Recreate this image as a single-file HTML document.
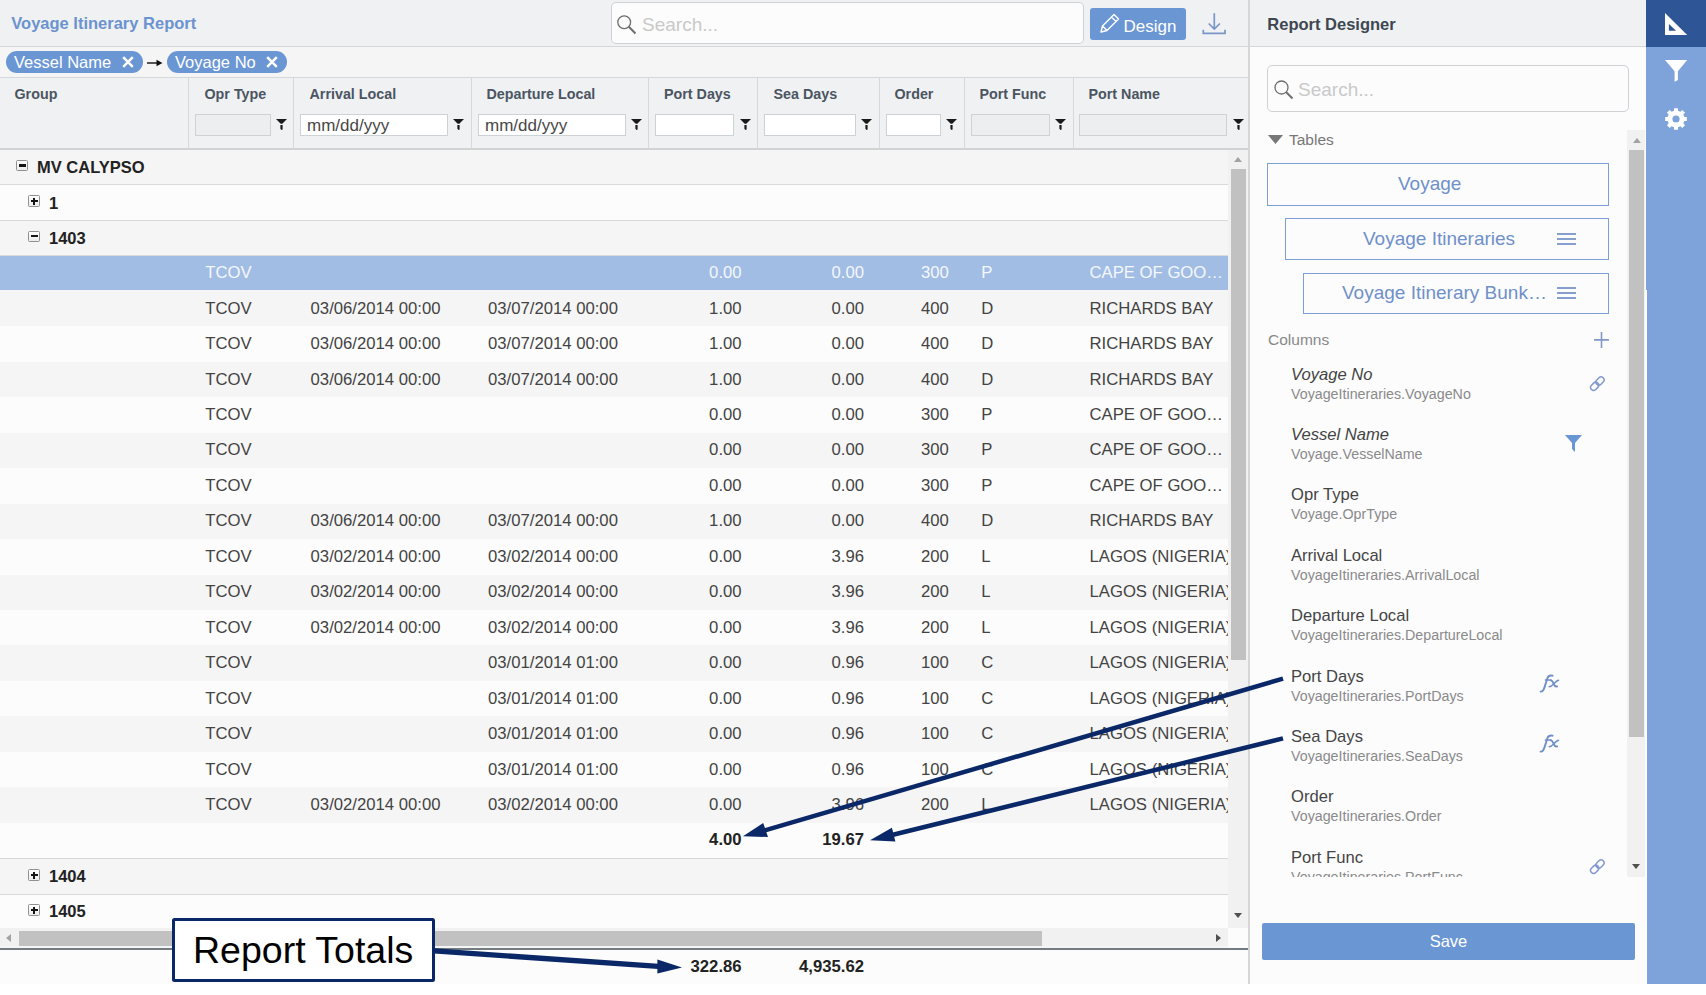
<!DOCTYPE html>
<html><head><meta charset="utf-8"><style>
*{box-sizing:border-box}
html,body{margin:0;padding:0}
body{width:1706px;height:995px;overflow:hidden;background:#fff;position:relative;font-family:"Liberation Sans", sans-serif;}
.ab{position:absolute}
.t{position:absolute;white-space:nowrap;line-height:1}
.d{font-size:16.7px;color:#434343}
.hd{font-size:14.3px;font-weight:bold;color:#4b5561}
.fi{position:absolute;top:114px;height:22px;border:1px solid #cdd2d6;background:#fff}
.fi.dis{background:#eceef0}
.fic{position:absolute;top:119px;width:11px;height:11px}
.r{text-align:right}
</style></head><body>

<div class="ab" style="left:0;top:0;width:1248px;height:984px;background:#f4f5f6"></div>
<div class="ab" style="left:0;top:0;width:1248px;height:47px;background:#f0f1f3;border-bottom:1px solid #d5d8db"></div>
<div class="t" style="left:11.3px;top:15px;font-size:16.5px;font-weight:bold;color:#6b93cf">Voyage Itinerary Report</div>
<div class="ab" style="left:611px;top:2px;width:473px;height:42px;border:1px solid #cfd2d5;border-radius:5px;background:#fcfcfc"></div>
<svg class="ab" style="left:616px;top:14px" width="22" height="22" viewBox="0 0 22 22"><circle cx="8.2" cy="8.2" r="6.4" fill="none" stroke="#6e6e6e" stroke-width="1.3"/><line x1="12.8" y1="12.8" x2="19.5" y2="19.5" stroke="#6e6e6e" stroke-width="2"/></svg>
<div class="t" style="left:642px;top:14.5px;font-size:19px;color:#c9c9c9">Search...</div>
<div class="ab" style="left:1090px;top:8px;width:96px;height:32px;background:#6b96d4;border-radius:3px"></div>
<svg class="ab" style="left:1099px;top:12px" width="22" height="22" viewBox="0 0 22 22"><path d="M2 20 L3.5 14 L15 2.5 L19.5 7 L8 18.5 Z M12.5 5 L17 9.5 M3.5 14 L8 18.5" fill="none" stroke="#fff" stroke-width="1.4" stroke-linejoin="round"/></svg>
<div class="t" style="left:1123.5px;top:18px;font-size:17px;color:#fff">Design</div>
<svg class="ab" style="left:1200px;top:11px" width="28" height="26" viewBox="0 0 28 26"><path d="M14.3 2.2 V18.2 M8.7 12.5 L14.3 18.1 L19.9 12.5" fill="none" stroke="#7a95c8" stroke-width="1.7"/><path d="M3.3 18.7 V22.3 H25 V18.7" fill="none" stroke="#7a95c8" stroke-width="1.7"/></svg>
<div class="ab" style="left:0;top:47px;width:1248px;height:31px;background:#f5f5f6;border-bottom:1px solid #d5d8db"></div>
<div class="ab" style="left:6px;top:51px;width:137px;height:22px;border-radius:11px;background:#6b96d4"></div>
<div class="t" style="left:14px;top:54px;font-size:16.5px;color:#fff">Vessel Name</div>
<svg class="ab" style="left:122px;top:56px" width="12" height="12" viewBox="0 0 12 12"><path d="M1.2 1.2 L10.8 10.8 M10.8 1.2 L1.2 10.8" stroke="#fff" stroke-width="2.5"/></svg>
<svg class="ab" style="left:146px;top:58px" width="18" height="10" viewBox="0 0 18 10"><path d="M1 5 H12" stroke="#111" stroke-width="1.4"/><path d="M10.5 1.8 L16.5 5 L10.5 8.2 Z" fill="#111"/></svg>
<div class="ab" style="left:167px;top:51px;width:120px;height:22px;border-radius:11px;background:#6b96d4"></div>
<div class="t" style="left:175px;top:54px;font-size:16.5px;color:#fff">Voyage No</div>
<svg class="ab" style="left:266px;top:56px" width="12" height="12" viewBox="0 0 12 12"><path d="M1.2 1.2 L10.8 10.8 M10.8 1.2 L1.2 10.8" stroke="#fff" stroke-width="2.5"/></svg>
<div class="ab" style="left:0;top:78px;width:1248px;height:71.5px;background:#f0f1f3;border-bottom:2.2px solid #d0d2d4"></div>
<div class="ab" style="left:188px;top:78px;width:1px;height:70.5px;background:#d6d9dc"></div>
<div class="ab" style="left:293px;top:78px;width:1px;height:70.5px;background:#d6d9dc"></div>
<div class="ab" style="left:471px;top:78px;width:1px;height:70.5px;background:#d6d9dc"></div>
<div class="ab" style="left:648px;top:78px;width:1px;height:70.5px;background:#d6d9dc"></div>
<div class="ab" style="left:757px;top:78px;width:1px;height:70.5px;background:#d6d9dc"></div>
<div class="ab" style="left:879px;top:78px;width:1px;height:70.5px;background:#d6d9dc"></div>
<div class="ab" style="left:964px;top:78px;width:1px;height:70.5px;background:#d6d9dc"></div>
<div class="ab" style="left:1073px;top:78px;width:1px;height:70.5px;background:#d6d9dc"></div>
<div class="t hd" style="left:14.5px;top:87px">Group</div>
<div class="t hd" style="left:204.5px;top:87px">Opr Type</div>
<div class="t hd" style="left:309.5px;top:87px">Arrival Local</div>
<div class="t hd" style="left:486.5px;top:87px">Departure Local</div>
<div class="t hd" style="left:664px;top:87px">Port Days</div>
<div class="t hd" style="left:773.5px;top:87px">Sea Days</div>
<div class="t hd" style="left:894.5px;top:87px">Order</div>
<div class="t hd" style="left:979.5px;top:87px">Port Func</div>
<div class="t hd" style="left:1088.5px;top:87px">Port Name</div>
<div class="fi dis" style="left:195px;width:76px"></div>
<svg class="fic" style="left:276px" viewBox="0 0 11 11"><path d="M0 0 H11 L6.3 4.8 H4.7 Z" fill="#1a1a1a"/><path d="M4.4 6 H6.6 V10.6 L5.5 11 L4.4 9.8 Z" fill="#1a1a1a"/></svg>
<div class="fi" style="left:300px;width:148px"></div>
<div class="t" style="left:307px;top:116.5px;font-size:17px;color:#484848">mm/dd/yyy</div>
<svg class="fic" style="left:453px" viewBox="0 0 11 11"><path d="M0 0 H11 L6.3 4.8 H4.7 Z" fill="#1a1a1a"/><path d="M4.4 6 H6.6 V10.6 L5.5 11 L4.4 9.8 Z" fill="#1a1a1a"/></svg>
<div class="fi" style="left:478px;width:148px"></div>
<div class="t" style="left:485px;top:116.5px;font-size:17px;color:#484848">mm/dd/yyy</div>
<svg class="fic" style="left:631px" viewBox="0 0 11 11"><path d="M0 0 H11 L6.3 4.8 H4.7 Z" fill="#1a1a1a"/><path d="M4.4 6 H6.6 V10.6 L5.5 11 L4.4 9.8 Z" fill="#1a1a1a"/></svg>
<div class="fi" style="left:655px;width:79px"></div>
<svg class="fic" style="left:739.5px" viewBox="0 0 11 11"><path d="M0 0 H11 L6.3 4.8 H4.7 Z" fill="#1a1a1a"/><path d="M4.4 6 H6.6 V10.6 L5.5 11 L4.4 9.8 Z" fill="#1a1a1a"/></svg>
<div class="fi" style="left:764px;width:92px"></div>
<svg class="fic" style="left:861px" viewBox="0 0 11 11"><path d="M0 0 H11 L6.3 4.8 H4.7 Z" fill="#1a1a1a"/><path d="M4.4 6 H6.6 V10.6 L5.5 11 L4.4 9.8 Z" fill="#1a1a1a"/></svg>
<div class="fi" style="left:886px;width:55px"></div>
<svg class="fic" style="left:946px" viewBox="0 0 11 11"><path d="M0 0 H11 L6.3 4.8 H4.7 Z" fill="#1a1a1a"/><path d="M4.4 6 H6.6 V10.6 L5.5 11 L4.4 9.8 Z" fill="#1a1a1a"/></svg>
<div class="fi dis" style="left:971px;width:79px"></div>
<svg class="fic" style="left:1055px" viewBox="0 0 11 11"><path d="M0 0 H11 L6.3 4.8 H4.7 Z" fill="#1a1a1a"/><path d="M4.4 6 H6.6 V10.6 L5.5 11 L4.4 9.8 Z" fill="#1a1a1a"/></svg>
<div class="fi dis" style="left:1079px;width:148px"></div>
<svg class="fic" style="left:1232.5px" viewBox="0 0 11 11"><path d="M0 0 H11 L6.3 4.8 H4.7 Z" fill="#1a1a1a"/><path d="M4.4 6 H6.6 V10.6 L5.5 11 L4.4 9.8 Z" fill="#1a1a1a"/></svg>
<div class="ab" style="left:0;top:149.5px;width:1228px;height:35.5px;background:#f5f5f5"></div>
<div class="ab" style="left:0;top:184px;width:1228px;height:2px;background:#dadada"></div>
<div class="ab" style="left:16.4px;top:159.75px;width:11.6px;height:11.6px;border:1px solid #909090;border-radius:1.5px;background:linear-gradient(#fff,#ececec)"></div><div class="ab" style="left:18.799999999999997px;top:164.35px;width:7px;height:2.2px;background:#151515"></div>
<div class="t" style="left:37px;top:159.25px;font-size:16.5px;font-weight:bold;color:#222">MV CALYPSO</div>
<div class="ab" style="left:0;top:185px;width:1228px;height:35.5px;background:#fcfcfc"></div>
<div class="ab" style="left:0;top:219.5px;width:1228px;height:2px;background:#dadada"></div>
<div class="ab" style="left:28.4px;top:195.25px;width:11.6px;height:11.6px;border:1px solid #909090;border-radius:1.5px;background:linear-gradient(#fff,#ececec)"></div><div class="ab" style="left:30.799999999999997px;top:199.85px;width:7px;height:2.2px;background:#151515"></div><div class="ab" style="left:33.199999999999996px;top:197.55px;width:2.2px;height:7px;background:#151515"></div>
<div class="t" style="left:49px;top:194.75px;font-size:16.5px;font-weight:bold;color:#222">1</div>
<div class="ab" style="left:0;top:220.5px;width:1228px;height:35.0px;background:#f5f5f5"></div>
<div class="ab" style="left:0;top:254.5px;width:1228px;height:2px;background:#dadada"></div>
<div class="ab" style="left:28.4px;top:230.5px;width:11.6px;height:11.6px;border:1px solid #909090;border-radius:1.5px;background:linear-gradient(#fff,#ececec)"></div><div class="ab" style="left:30.799999999999997px;top:235.1px;width:7px;height:2.2px;background:#151515"></div>
<div class="t" style="left:49px;top:230.0px;font-size:16.5px;font-weight:bold;color:#222">1403</div>
<div class="ab" style="left:0;top:255.50px;width:1228px;height:34.40px;background:#a2bde4"></div>
<div class="t d" style="left:205.3px;top:265.23px;color:#f4f7fc">TCOV</div>
<div class="t d r" style="left:641.6px;width:100px;top:265.23px;color:#f4f7fc">0.00</div>
<div class="t d r" style="left:764px;width:100px;top:265.23px;color:#f4f7fc">0.00</div>
<div class="t d r" style="left:848.8px;width:100px;top:265.23px;color:#f4f7fc">300</div>
<div class="t d" style="left:981.3px;top:265.23px;color:#f4f7fc">P</div>
<div class="t d" style="left:1089.5px;width:138.5px;overflow:hidden;top:265.23px;color:#f4f7fc">CAPE OF GOO&#8230;</div>
<div class="ab" style="left:0;top:289.90px;width:1228px;height:36.50px;background:#f5f5f5"></div>
<div class="t d" style="left:205.3px;top:300.68px;color:#434343">TCOV</div>
<div class="t d" style="left:310.6px;top:300.68px;color:#434343">03/06/2014 00:00</div>
<div class="t d" style="left:488px;top:300.68px;color:#434343">03/07/2014 00:00</div>
<div class="t d r" style="left:641.6px;width:100px;top:300.68px;color:#434343">1.00</div>
<div class="t d r" style="left:764px;width:100px;top:300.68px;color:#434343">0.00</div>
<div class="t d r" style="left:848.8px;width:100px;top:300.68px;color:#434343">400</div>
<div class="t d" style="left:981.3px;top:300.68px;color:#434343">D</div>
<div class="t d" style="left:1089.5px;width:138.5px;overflow:hidden;top:300.68px;color:#434343">RICHARDS BAY</div>
<div class="ab" style="left:0;top:326.40px;width:1228px;height:35.45px;background:#fcfcfc"></div>
<div class="t d" style="left:205.3px;top:336.12px;color:#434343">TCOV</div>
<div class="t d" style="left:310.6px;top:336.12px;color:#434343">03/06/2014 00:00</div>
<div class="t d" style="left:488px;top:336.12px;color:#434343">03/07/2014 00:00</div>
<div class="t d r" style="left:641.6px;width:100px;top:336.12px;color:#434343">1.00</div>
<div class="t d r" style="left:764px;width:100px;top:336.12px;color:#434343">0.00</div>
<div class="t d r" style="left:848.8px;width:100px;top:336.12px;color:#434343">400</div>
<div class="t d" style="left:981.3px;top:336.12px;color:#434343">D</div>
<div class="t d" style="left:1089.5px;width:138.5px;overflow:hidden;top:336.12px;color:#434343">RICHARDS BAY</div>
<div class="ab" style="left:0;top:361.85px;width:1228px;height:35.45px;background:#f5f5f5"></div>
<div class="t d" style="left:205.3px;top:371.58px;color:#434343">TCOV</div>
<div class="t d" style="left:310.6px;top:371.58px;color:#434343">03/06/2014 00:00</div>
<div class="t d" style="left:488px;top:371.58px;color:#434343">03/07/2014 00:00</div>
<div class="t d r" style="left:641.6px;width:100px;top:371.58px;color:#434343">1.00</div>
<div class="t d r" style="left:764px;width:100px;top:371.58px;color:#434343">0.00</div>
<div class="t d r" style="left:848.8px;width:100px;top:371.58px;color:#434343">400</div>
<div class="t d" style="left:981.3px;top:371.58px;color:#434343">D</div>
<div class="t d" style="left:1089.5px;width:138.5px;overflow:hidden;top:371.58px;color:#434343">RICHARDS BAY</div>
<div class="ab" style="left:0;top:397.30px;width:1228px;height:35.45px;background:#fcfcfc"></div>
<div class="t d" style="left:205.3px;top:407.03px;color:#434343">TCOV</div>
<div class="t d r" style="left:641.6px;width:100px;top:407.03px;color:#434343">0.00</div>
<div class="t d r" style="left:764px;width:100px;top:407.03px;color:#434343">0.00</div>
<div class="t d r" style="left:848.8px;width:100px;top:407.03px;color:#434343">300</div>
<div class="t d" style="left:981.3px;top:407.03px;color:#434343">P</div>
<div class="t d" style="left:1089.5px;width:138.5px;overflow:hidden;top:407.03px;color:#434343">CAPE OF GOO&#8230;</div>
<div class="ab" style="left:0;top:432.75px;width:1228px;height:35.45px;background:#f5f5f5"></div>
<div class="t d" style="left:205.3px;top:442.48px;color:#434343">TCOV</div>
<div class="t d r" style="left:641.6px;width:100px;top:442.48px;color:#434343">0.00</div>
<div class="t d r" style="left:764px;width:100px;top:442.48px;color:#434343">0.00</div>
<div class="t d r" style="left:848.8px;width:100px;top:442.48px;color:#434343">300</div>
<div class="t d" style="left:981.3px;top:442.48px;color:#434343">P</div>
<div class="t d" style="left:1089.5px;width:138.5px;overflow:hidden;top:442.48px;color:#434343">CAPE OF GOO&#8230;</div>
<div class="ab" style="left:0;top:468.20px;width:1228px;height:35.45px;background:#fcfcfc"></div>
<div class="t d" style="left:205.3px;top:477.93px;color:#434343">TCOV</div>
<div class="t d r" style="left:641.6px;width:100px;top:477.93px;color:#434343">0.00</div>
<div class="t d r" style="left:764px;width:100px;top:477.93px;color:#434343">0.00</div>
<div class="t d r" style="left:848.8px;width:100px;top:477.93px;color:#434343">300</div>
<div class="t d" style="left:981.3px;top:477.93px;color:#434343">P</div>
<div class="t d" style="left:1089.5px;width:138.5px;overflow:hidden;top:477.93px;color:#434343">CAPE OF GOO&#8230;</div>
<div class="ab" style="left:0;top:503.65px;width:1228px;height:35.45px;background:#f5f5f5"></div>
<div class="t d" style="left:205.3px;top:513.38px;color:#434343">TCOV</div>
<div class="t d" style="left:310.6px;top:513.38px;color:#434343">03/06/2014 00:00</div>
<div class="t d" style="left:488px;top:513.38px;color:#434343">03/07/2014 00:00</div>
<div class="t d r" style="left:641.6px;width:100px;top:513.38px;color:#434343">1.00</div>
<div class="t d r" style="left:764px;width:100px;top:513.38px;color:#434343">0.00</div>
<div class="t d r" style="left:848.8px;width:100px;top:513.38px;color:#434343">400</div>
<div class="t d" style="left:981.3px;top:513.38px;color:#434343">D</div>
<div class="t d" style="left:1089.5px;width:138.5px;overflow:hidden;top:513.38px;color:#434343">RICHARDS BAY</div>
<div class="ab" style="left:0;top:539.10px;width:1228px;height:35.45px;background:#fcfcfc"></div>
<div class="t d" style="left:205.3px;top:548.83px;color:#434343">TCOV</div>
<div class="t d" style="left:310.6px;top:548.83px;color:#434343">03/02/2014 00:00</div>
<div class="t d" style="left:488px;top:548.83px;color:#434343">03/02/2014 00:00</div>
<div class="t d r" style="left:641.6px;width:100px;top:548.83px;color:#434343">0.00</div>
<div class="t d r" style="left:764px;width:100px;top:548.83px;color:#434343">3.96</div>
<div class="t d r" style="left:848.8px;width:100px;top:548.83px;color:#434343">200</div>
<div class="t d" style="left:981.3px;top:548.83px;color:#434343">L</div>
<div class="t d" style="left:1089.5px;width:138.5px;overflow:hidden;top:548.83px;color:#434343">LAGOS (NIGERIA)</div>
<div class="ab" style="left:0;top:574.55px;width:1228px;height:35.45px;background:#f5f5f5"></div>
<div class="t d" style="left:205.3px;top:584.27px;color:#434343">TCOV</div>
<div class="t d" style="left:310.6px;top:584.27px;color:#434343">03/02/2014 00:00</div>
<div class="t d" style="left:488px;top:584.27px;color:#434343">03/02/2014 00:00</div>
<div class="t d r" style="left:641.6px;width:100px;top:584.27px;color:#434343">0.00</div>
<div class="t d r" style="left:764px;width:100px;top:584.27px;color:#434343">3.96</div>
<div class="t d r" style="left:848.8px;width:100px;top:584.27px;color:#434343">200</div>
<div class="t d" style="left:981.3px;top:584.27px;color:#434343">L</div>
<div class="t d" style="left:1089.5px;width:138.5px;overflow:hidden;top:584.27px;color:#434343">LAGOS (NIGERIA)</div>
<div class="ab" style="left:0;top:610.00px;width:1228px;height:35.45px;background:#fcfcfc"></div>
<div class="t d" style="left:205.3px;top:619.73px;color:#434343">TCOV</div>
<div class="t d" style="left:310.6px;top:619.73px;color:#434343">03/02/2014 00:00</div>
<div class="t d" style="left:488px;top:619.73px;color:#434343">03/02/2014 00:00</div>
<div class="t d r" style="left:641.6px;width:100px;top:619.73px;color:#434343">0.00</div>
<div class="t d r" style="left:764px;width:100px;top:619.73px;color:#434343">3.96</div>
<div class="t d r" style="left:848.8px;width:100px;top:619.73px;color:#434343">200</div>
<div class="t d" style="left:981.3px;top:619.73px;color:#434343">L</div>
<div class="t d" style="left:1089.5px;width:138.5px;overflow:hidden;top:619.73px;color:#434343">LAGOS (NIGERIA)</div>
<div class="ab" style="left:0;top:645.45px;width:1228px;height:35.45px;background:#f5f5f5"></div>
<div class="t d" style="left:205.3px;top:655.18px;color:#434343">TCOV</div>
<div class="t d" style="left:488px;top:655.18px;color:#434343">03/01/2014 01:00</div>
<div class="t d r" style="left:641.6px;width:100px;top:655.18px;color:#434343">0.00</div>
<div class="t d r" style="left:764px;width:100px;top:655.18px;color:#434343">0.96</div>
<div class="t d r" style="left:848.8px;width:100px;top:655.18px;color:#434343">100</div>
<div class="t d" style="left:981.3px;top:655.18px;color:#434343">C</div>
<div class="t d" style="left:1089.5px;width:138.5px;overflow:hidden;top:655.18px;color:#434343">LAGOS (NIGERIA)</div>
<div class="ab" style="left:0;top:680.90px;width:1228px;height:35.45px;background:#fcfcfc"></div>
<div class="t d" style="left:205.3px;top:690.63px;color:#434343">TCOV</div>
<div class="t d" style="left:488px;top:690.63px;color:#434343">03/01/2014 01:00</div>
<div class="t d r" style="left:641.6px;width:100px;top:690.63px;color:#434343">0.00</div>
<div class="t d r" style="left:764px;width:100px;top:690.63px;color:#434343">0.96</div>
<div class="t d r" style="left:848.8px;width:100px;top:690.63px;color:#434343">100</div>
<div class="t d" style="left:981.3px;top:690.63px;color:#434343">C</div>
<div class="t d" style="left:1089.5px;width:138.5px;overflow:hidden;top:690.63px;color:#434343">LAGOS (NIGERIA)</div>
<div class="ab" style="left:0;top:716.35px;width:1228px;height:35.45px;background:#f5f5f5"></div>
<div class="t d" style="left:205.3px;top:726.08px;color:#434343">TCOV</div>
<div class="t d" style="left:488px;top:726.08px;color:#434343">03/01/2014 01:00</div>
<div class="t d r" style="left:641.6px;width:100px;top:726.08px;color:#434343">0.00</div>
<div class="t d r" style="left:764px;width:100px;top:726.08px;color:#434343">0.96</div>
<div class="t d r" style="left:848.8px;width:100px;top:726.08px;color:#434343">100</div>
<div class="t d" style="left:981.3px;top:726.08px;color:#434343">C</div>
<div class="t d" style="left:1089.5px;width:138.5px;overflow:hidden;top:726.08px;color:#434343">LAGOS (NIGERIA)</div>
<div class="ab" style="left:0;top:751.80px;width:1228px;height:35.45px;background:#fcfcfc"></div>
<div class="t d" style="left:205.3px;top:761.53px;color:#434343">TCOV</div>
<div class="t d" style="left:488px;top:761.53px;color:#434343">03/01/2014 01:00</div>
<div class="t d r" style="left:641.6px;width:100px;top:761.53px;color:#434343">0.00</div>
<div class="t d r" style="left:764px;width:100px;top:761.53px;color:#434343">0.96</div>
<div class="t d r" style="left:848.8px;width:100px;top:761.53px;color:#434343">100</div>
<div class="t d" style="left:981.3px;top:761.53px;color:#434343">C</div>
<div class="t d" style="left:1089.5px;width:138.5px;overflow:hidden;top:761.53px;color:#434343">LAGOS (NIGERIA)</div>
<div class="ab" style="left:0;top:787.25px;width:1228px;height:35.45px;background:#f5f5f5"></div>
<div class="t d" style="left:205.3px;top:796.98px;color:#434343">TCOV</div>
<div class="t d" style="left:310.6px;top:796.98px;color:#434343">03/02/2014 00:00</div>
<div class="t d" style="left:488px;top:796.98px;color:#434343">03/02/2014 00:00</div>
<div class="t d r" style="left:641.6px;width:100px;top:796.98px;color:#434343">0.00</div>
<div class="t d r" style="left:764px;width:100px;top:796.98px;color:#434343">3.96</div>
<div class="t d r" style="left:848.8px;width:100px;top:796.98px;color:#434343">200</div>
<div class="t d" style="left:981.3px;top:796.98px;color:#434343">L</div>
<div class="t d" style="left:1089.5px;width:138.5px;overflow:hidden;top:796.98px;color:#434343">LAGOS (NIGERIA)</div>
<div class="ab" style="left:0;top:822.70px;width:1228px;height:36.30px;background:#fcfcfc;border-bottom:1.5px solid #d8d8d8"></div>
<div class="t d r" style="left:641.6px;width:100px;top:832.25px;font-weight:bold;color:#222">4.00</div>
<div class="t d r" style="left:764px;width:100px;top:832.25px;font-weight:bold;color:#222">19.67</div>
<div class="ab" style="left:0;top:859px;width:1228px;height:35.5px;background:#f5f5f5"></div>
<div class="ab" style="left:0;top:893.5px;width:1228px;height:2px;background:#dadada"></div>
<div class="ab" style="left:28.4px;top:869.25px;width:11.6px;height:11.6px;border:1px solid #909090;border-radius:1.5px;background:linear-gradient(#fff,#ececec)"></div><div class="ab" style="left:30.799999999999997px;top:873.85px;width:7px;height:2.2px;background:#151515"></div><div class="ab" style="left:33.199999999999996px;top:871.55px;width:2.2px;height:7px;background:#151515"></div>
<div class="t" style="left:49px;top:867.55px;font-size:16.5px;font-weight:bold;color:#222">1404</div>
<div class="ab" style="left:0;top:894.5px;width:1228px;height:34.5px;background:#fcfcfc"></div>
<div class="ab" style="left:28.4px;top:904.25px;width:11.6px;height:11.6px;border:1px solid #909090;border-radius:1.5px;background:linear-gradient(#fff,#ececec)"></div><div class="ab" style="left:30.799999999999997px;top:908.85px;width:7px;height:2.2px;background:#151515"></div><div class="ab" style="left:33.199999999999996px;top:906.55px;width:2.2px;height:7px;background:#151515"></div>
<div class="t" style="left:49px;top:902.55px;font-size:16.5px;font-weight:bold;color:#222">1405</div>
<div class="ab" style="left:1228px;top:149.5px;width:20px;height:779.5px;background:#f1f1f1"></div>
<svg class="ab" style="left:1233px;top:156px" width="10" height="6" viewBox="0 0 10 6"><path d="M1 6 L5 1 L9 6 Z" fill="#a3a3a3"/></svg>
<div class="ab" style="left:1231px;top:169px;width:15px;height:491px;background:#c1c1c1"></div>
<svg class="ab" style="left:1233px;top:913px" width="10" height="6" viewBox="0 0 10 6"><path d="M1 0 L5 5 L9 0 Z" fill="#505050"/></svg>
<div class="ab" style="left:0;top:928px;width:1228px;height:18px;background:#f1f1f1"></div>
<svg class="ab" style="left:5px;top:933px" width="7" height="10" viewBox="0 0 7 10"><path d="M6 1 L1 5 L6 9 Z" fill="#a3a3a3"/></svg>
<div class="ab" style="left:19px;top:931px;width:1023px;height:15px;background:#c1c1c1"></div>
<svg class="ab" style="left:1215px;top:933px" width="7" height="10" viewBox="0 0 7 10"><path d="M1 1 L6 5 L1 9 Z" fill="#505050"/></svg>
<div class="ab" style="left:1228px;top:928px;width:20px;height:20px;background:#fcfcfc"></div>
<div class="ab" style="left:0;top:948px;width:1248px;height:2px;background:#747b81"></div>
<div class="ab" style="left:0;top:950px;width:1248px;height:34px;background:#fcfcfc"></div>
<div class="t d r" style="left:641.6px;width:100px;top:959px;font-weight:bold;color:#222">322.86</div>
<div class="t d r" style="left:764px;width:100px;top:959px;font-weight:bold;color:#222">4,935.62</div>
<div class="ab" style="left:1248px;top:0;width:2px;height:984px;background:#d6d6d6"></div>
<div class="ab" style="left:1250px;top:0;width:396px;height:984px;background:#fcfcfd"></div>
<div class="ab" style="left:1250px;top:0;width:396px;height:47px;background:#f0f1f3;border-bottom:1px solid #d5d8db"></div>
<div class="t" style="left:1267.3px;top:16px;font-size:16.5px;font-weight:bold;color:#3d4752">Report Designer</div>
<div class="ab" style="left:1267px;top:65px;width:362px;height:47px;border:1px solid #cfd2d5;border-radius:5px;background:#fcfcfd"></div>
<svg class="ab" style="left:1272px;top:78px" width="24" height="24" viewBox="0 0 24 24"><circle cx="9.5" cy="9.5" r="6.5" fill="none" stroke="#6e6e6e" stroke-width="1.3"/><line x1="14" y1="14" x2="20.5" y2="20.5" stroke="#6e6e6e" stroke-width="2"/></svg>
<div class="t" style="left:1298px;top:79.5px;font-size:19px;color:#c9c9c9">Search...</div>
<svg class="ab" style="left:1268px;top:135px" width="15" height="9" viewBox="0 0 15 9"><path d="M0 0 H15 L7.5 9 Z" fill="#777"/></svg>
<div class="t" style="left:1289px;top:132px;font-size:15.5px;color:#777">Tables</div>
<div class="ab" style="left:1627px;top:130px;width:18px;height:747px;background:#f1f1f1"></div>
<svg class="ab" style="left:1632px;top:137px" width="10" height="6" viewBox="0 0 10 6"><path d="M1 6 L5 1 L9 6 Z" fill="#a3a3a3"/></svg>
<div class="ab" style="left:1629px;top:150px;width:15px;height:587px;background:#c1c1c1"></div>
<svg class="ab" style="left:1631px;top:864px" width="10" height="6" viewBox="0 0 10 6"><path d="M1 0 L5 5 L9 0 Z" fill="#505050"/></svg>
<div class="ab" style="left:1267px;top:163px;width:342px;height:42.5px;border:1.5px solid #7c9fd5;background:#fcfcfd"></div>
<div class="t" style="left:1398px;top:173.95px;font-size:19px;color:#6f90c9">Voyage</div>
<div class="ab" style="left:1285px;top:218px;width:324px;height:42px;border:1.5px solid #7c9fd5;background:#fcfcfd"></div>
<div class="t" style="left:1363px;top:228.7px;font-size:19px;color:#6f90c9">Voyage Itineraries</div>
<div class="ab" style="left:1557px;top:232.7px;width:19px;height:2px;background:#879ed0"></div>
<div class="ab" style="left:1557px;top:237.6px;width:19px;height:2px;background:#879ed0"></div>
<div class="ab" style="left:1557px;top:242.5px;width:19px;height:2px;background:#879ed0"></div>
<div class="ab" style="left:1303px;top:272.5px;width:306px;height:41.5px;border:1.5px solid #7c9fd5;background:#fcfcfd"></div>
<div class="t" style="left:1342px;top:282.95px;font-size:19px;color:#6f90c9">Voyage Itinerary Bunk&#8230;</div>
<div class="ab" style="left:1557px;top:286.95px;width:19px;height:2px;background:#879ed0"></div>
<div class="ab" style="left:1557px;top:291.84999999999997px;width:19px;height:2px;background:#879ed0"></div>
<div class="ab" style="left:1557px;top:296.75px;width:19px;height:2px;background:#879ed0"></div>
<div class="t" style="left:1268px;top:332px;font-size:15.5px;color:#888">Columns</div>
<svg class="ab" style="left:1593px;top:331px" width="17" height="17" viewBox="0 0 17 17"><path d="M8.5 1 V17 M1 8.9 H16" stroke="#8197c6" stroke-width="1.6"/></svg>
<div class="ab" style="left:1250px;top:355px;width:377px;height:522px;overflow:hidden">
<div class="t" style="left:41px;top:11.5px;font-size:16.6px;color:#444;font-style:italic;">Voyage No</div>
<div class="t" style="left:41px;top:31.5px;font-size:14.25px;color:#8a8a8a">VoyageItineraries.VoyageNo</div>
<svg class="ab" style="left:338px;top:19.5px" width="19" height="17" viewBox="0 0 19 17"><g transform="rotate(-45 9.5 8.5)" fill="none" stroke="#8299cf" stroke-width="1.5"><rect x="1" y="5.5" width="9" height="6" rx="3"/><rect x="8.5" y="5.5" width="9" height="6" rx="3"/></g></svg>
<div class="t" style="left:41px;top:71.89999999999998px;font-size:16.6px;color:#444;font-style:italic;">Vessel Name</div>
<div class="t" style="left:41px;top:91.89999999999998px;font-size:14.25px;color:#8a8a8a">Voyage.VesselName</div>
<svg class="ab" style="left:315px;top:79.89999999999998px" width="17" height="17" viewBox="0 0 17 17"><path d="M0 0 H17 L10 8 V17 L7 14 V8 Z" fill="#6b96d4"/></svg>
<div class="t" style="left:41px;top:132.3px;font-size:16.6px;color:#444;">Opr Type</div>
<div class="t" style="left:41px;top:152.3px;font-size:14.25px;color:#8a8a8a">Voyage.OprType</div>
<div class="t" style="left:41px;top:192.70000000000005px;font-size:16.6px;color:#444;">Arrival Local</div>
<div class="t" style="left:41px;top:212.70000000000005px;font-size:14.25px;color:#8a8a8a">VoyageItineraries.ArrivalLocal</div>
<div class="t" style="left:41px;top:253.10000000000002px;font-size:16.6px;color:#444;">Departure Local</div>
<div class="t" style="left:41px;top:273.1px;font-size:14.25px;color:#8a8a8a">VoyageItineraries.DepartureLocal</div>
<div class="t" style="left:41px;top:313.5px;font-size:16.6px;color:#444;">Port Days</div>
<div class="t" style="left:41px;top:333.5px;font-size:14.25px;color:#8a8a8a">VoyageItineraries.PortDays</div>
<svg class="ab" style="left:288px;top:317.0px" width="24" height="22" viewBox="0 0 24 22"><g fill="none" stroke="#7090c8" stroke-linecap="round"><path d="M2.6 19.6 C4.3 19.8 5.6 18.6 6.4 15.6 L9.4 6.2 C10.3 3.9 11.8 3.2 14.6 3.7" stroke-width="1.9"/><path d="M7.4 7.9 H13" stroke-width="1.5"/><path d="M12.6 8.3 C14 8.2 14.8 9.5 15.6 11.6 C16.4 13.8 17.2 15 19.2 14.4" stroke-width="1.8"/><path d="M20.6 8.2 C19 8.4 17.8 9.6 15.8 11.8 C14 13.8 12.8 15 11.2 14.6" stroke-width="1.5"/></g></svg>
<div class="t" style="left:41px;top:373.9px;font-size:16.6px;color:#444;">Sea Days</div>
<div class="t" style="left:41px;top:393.9px;font-size:14.25px;color:#8a8a8a">VoyageItineraries.SeaDays</div>
<svg class="ab" style="left:288px;top:377.4000000000001px" width="24" height="22" viewBox="0 0 24 22"><g fill="none" stroke="#7090c8" stroke-linecap="round"><path d="M2.6 19.6 C4.3 19.8 5.6 18.6 6.4 15.6 L9.4 6.2 C10.3 3.9 11.8 3.2 14.6 3.7" stroke-width="1.9"/><path d="M7.4 7.9 H13" stroke-width="1.5"/><path d="M12.6 8.3 C14 8.2 14.8 9.5 15.6 11.6 C16.4 13.8 17.2 15 19.2 14.4" stroke-width="1.8"/><path d="M20.6 8.2 C19 8.4 17.8 9.6 15.8 11.8 C14 13.8 12.8 15 11.2 14.6" stroke-width="1.5"/></g></svg>
<div class="t" style="left:41px;top:434.29999999999995px;font-size:16.6px;color:#444;">Order</div>
<div class="t" style="left:41px;top:454.29999999999995px;font-size:14.25px;color:#8a8a8a">VoyageItineraries.Order</div>
<div class="t" style="left:41px;top:494.70000000000005px;font-size:16.6px;color:#444;">Port Func</div>
<div class="t" style="left:41px;top:514.7px;font-size:14.25px;color:#8a8a8a">VoyageItineraries.PortFunc</div>
<svg class="ab" style="left:338px;top:502.70000000000005px" width="19" height="17" viewBox="0 0 19 17"><g transform="rotate(-45 9.5 8.5)" fill="none" stroke="#8299cf" stroke-width="1.5"><rect x="1" y="5.5" width="9" height="6" rx="3"/><rect x="8.5" y="5.5" width="9" height="6" rx="3"/></g></svg>
</div>
<div class="ab" style="left:1262px;top:923px;width:373px;height:37px;background:#6b96d4;border-radius:2px"></div>
<div class="t" style="left:1262px;width:373px;text-align:center;top:933px;font-size:16.5px;color:#fff">Save</div>
<div class="ab" style="left:1646px;top:0;width:60px;height:290px;background:#7ea3da"></div>
<div class="ab" style="left:1647px;top:290px;width:59px;height:693.5px;background:#7ea3da"></div>
<div class="ab" style="left:1646px;top:0;width:60px;height:47px;background:#2e5596"></div>
<svg class="ab" style="left:1664px;top:12px" width="25" height="25" viewBox="0 0 25 25"><path d="M1 1 L23.2 23 H1 Z M4.9 11.9 V18.7 H12.1 Z" fill="#fff" fill-rule="evenodd"/></svg>
<svg class="ab" style="left:1665px;top:60px" width="23" height="23" viewBox="0 0 23 23"><path d="M0 0 H22.2 L12.9 11.3 V20.1 L9.6 21.7 V11.3 Z" fill="#fff"/></svg>
<svg class="ab" style="left:1664.1px;top:106.7px" width="24" height="24" viewBox="0 0 24 24"><path d="M10.00,3.64 L10.00,1.18 L14.00,1.18 L14.00,3.64 L16.50,4.67 L18.23,2.94 L21.06,5.77 L19.33,7.50 L20.36,10.00 L22.82,10.00 L22.82,14.00 L20.36,14.00 L19.33,16.50 L21.06,18.23 L18.23,21.06 L16.50,19.33 L14.00,20.36 L14.00,22.82 L10.00,22.82 L10.00,20.36 L7.50,19.33 L5.77,21.06 L2.94,18.23 L4.67,16.50 L3.64,14.00 L1.18,14.00 L1.18,10.00 L3.64,10.00 L4.67,7.50 L2.94,5.77 L5.77,2.94 L7.50,4.67 Z M15.6 12 A3.6 3.6 0 1 0 8.4 12 A3.6 3.6 0 1 0 15.6 12 Z" fill="#fff" fill-rule="evenodd"/></svg>
<svg class="ab" style="left:0;top:0" width="1706" height="995" viewBox="0 0 1706 995">
<g stroke="#0a2767" stroke-width="4.5" fill="#0a2767">
<line x1="1283" y1="678.6" x2="764" y2="830.6"/>
<line x1="1283" y1="738.4" x2="891" y2="835.3"/>
<line x1="434" y1="950.9" x2="662" y2="966.6" stroke-width="5.3"/>
</g>
<g fill="#0a2767">
<path d="M743 836.3 L763.2 822.9 L768 837 Z"/>
<path d="M870 840.2 L891.9 827.8 L895.4 841.6 Z"/>
<path d="M682 967.5 L657.4 959.5 L657.4 973.6 Z"/>
</g>
<rect x="173.5" y="919.5" width="260" height="61" fill="#fff" stroke="#0a2767" stroke-width="3" rx="1"/>
</svg>
<div class="t" style="left:193px;top:931.5px;font-size:37.5px;color:#000">Report Totals</div>
</body></html>
